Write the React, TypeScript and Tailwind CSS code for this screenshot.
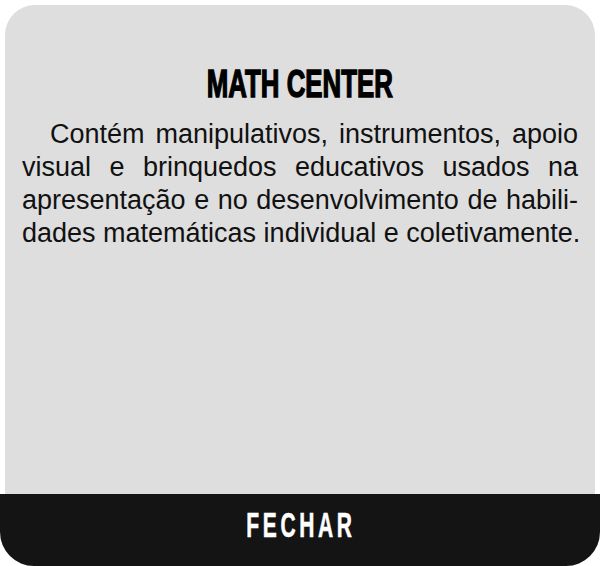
export default function App() {
  const lines = [
    'Contém manipulativos, instrumentos, apoio',
    'visual e brinquedos educativos usados na',
    'apresentação e no desenvolvimento de habili-',
  ];

  return (
    <div className="flex h-[566px] w-[600px] flex-col bg-white">
      <div className="mx-[5px] mt-[5px] flex flex-1 flex-col rounded-t-[30px] bg-[#dedede]">
        {/* título */}
        <div className="flex justify-center pt-[57px]">
          <h1 className="origin-center scale-x-[0.68] font-['Liberation_Sans',Arial,sans-serif] text-[38px] leading-[44px] font-bold text-black [-webkit-text-stroke:1.4px_#000]">
            MATH CENTER
          </h1>
        </div>

        {/* descrição */}
        <div className="px-[17px] pt-[12px] font-['Liberation_Sans',Arial,sans-serif] text-[27px] leading-[33px] text-[#111]">
          {lines.map((l, i) => (
            <div key={i} className={`text-justify [text-align-last:justify] ${i === 0 ? 'pl-[28px]' : ''}`}>
              {l}
            </div>
          ))}
          <div className="whitespace-nowrap">dades matemáticas individual e coletivamente.</div>
        </div>
      </div>

      <button className="flex h-[72px] w-full items-center justify-center rounded-b-[34px] bg-[#141414] pb-[11px]">
        <span className="ml-[2px] scale-x-[0.6] font-['Liberation_Sans',Arial,sans-serif] text-[35px] leading-none font-bold tracking-[6px] text-white [-webkit-text-stroke:0.6px_#fff]">
          FECHAR
        </span>
      </button>
    </div>
  );
}
